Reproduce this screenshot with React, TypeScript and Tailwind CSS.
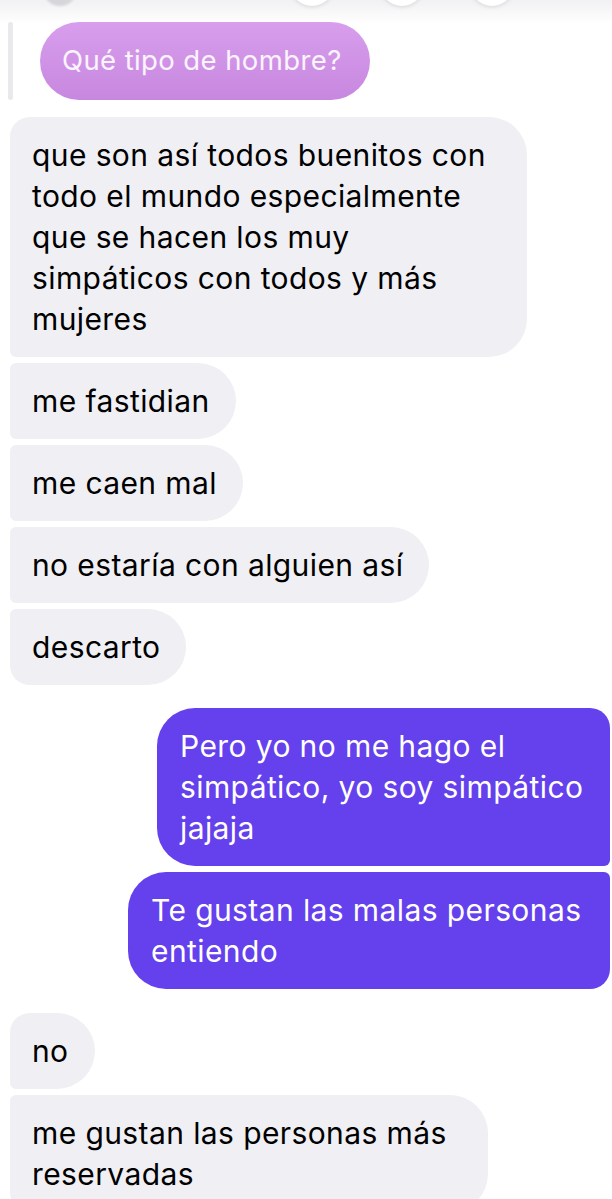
type Side = "in" | "out";

interface Msg {
  side: Side;
  lines: string[];
  width?: string;
  corners: string;
  gapTop: string;
}

const messages: Msg[] = [
  {
    side: "in",
    lines: [
      "que son así todos buenitos con",
      "todo el mundo especialmente",
      "que se hacen los muy",
      "simpáticos con todos y más",
      "mujeres",
    ],
    width: "w-[517px]",
    corners: "rounded-tl-[20px] rounded-bl-[6px] rounded-r-[38px]",
    gapTop: "mt-[17px]",
  },
  { side: "in", lines: ["me fastidian"], corners: "rounded-l-[6px] rounded-r-[38px]", gapTop: "mt-[6px]" },
  { side: "in", lines: ["me caen mal"], corners: "rounded-l-[6px] rounded-r-[38px]", gapTop: "mt-[6px]" },
  { side: "in", lines: ["no estaría con alguien así"], corners: "rounded-l-[6px] rounded-r-[38px]", gapTop: "mt-[6px]" },
  { side: "in", lines: ["descarto"], corners: "rounded-tl-[6px] rounded-bl-[20px] rounded-r-[38px]", gapTop: "mt-[6px]" },
  {
    side: "out",
    lines: ["Pero yo no me hago el", "simpático, yo soy simpático", "jajaja"],
    width: "w-[453px]",
    corners: "rounded-l-[38px] rounded-tr-[20px] rounded-br-[6px]",
    gapTop: "mt-[23px]",
  },
  {
    side: "out",
    lines: ["Te gustan las malas personas", "entiendo"],
    width: "w-[482px]",
    corners: "rounded-l-[38px] rounded-tr-[6px] rounded-br-[20px]",
    gapTop: "mt-[6px]",
  },
  { side: "in", lines: ["no"], corners: "rounded-tl-[20px] rounded-bl-[6px] rounded-r-[38px]", gapTop: "mt-[24px]" },
  {
    side: "in",
    lines: ["me gustan las personas más", "reservadas"],
    width: "w-[478px]",
    corners: "rounded-tl-[6px] rounded-bl-[20px] rounded-r-[38px]",
    gapTop: "mt-[6px]",
  },
];

const Bubble = ({ msg }: { msg: Msg }) => {
  const isOut = msg.side === "out";
  return (
    <div className={`flex ${isOut ? "justify-end pr-[2px]" : "justify-start pl-[10px]"} ${msg.gapTop}`}>
      <div
        className={`${msg.width ?? ""} ${msg.corners} ${
          isOut ? "bg-[#6441ed] text-white pl-[23px]" : "bg-[#efeff4] text-black pl-[22px]"
        } pr-[26px] py-[17.5px] text-[30px] leading-[41px] tracking-[0.4px]`}
      >
        {msg.lines.map((l) => (
          <div key={l} className="whitespace-nowrap">
            {l}
          </div>
        ))}
      </div>
    </div>
  );
};

export default function App() {
  return (
    <div
      className="relative w-[612px] h-[1199px] overflow-hidden bg-white"
      style={{ fontFamily: "Inter, 'Noto Sans', sans-serif" }}
    >
      {/* blurred reaction bar peeking from the top */}
      <div className="absolute left-0 top-0 w-full h-[24px] bg-gradient-to-b from-[#f1f1f3] to-white">
        <div className="flex items-end -mt-[38px] pl-[43px]">
          <div className="w-[34px] h-[41px] rounded-full bg-[#d5d5da] blur-[1px]" />
          <div className="ml-[213px] flex gap-[46px]">
            <div className="w-[44px] h-[44px] rounded-full bg-white shadow-[0_1px_4px_rgba(0,0,0,0.12)]" />
            <div className="w-[44px] h-[44px] rounded-full bg-white shadow-[0_1px_4px_rgba(0,0,0,0.12)]" />
            <div className="w-[44px] h-[44px] rounded-full bg-white shadow-[0_1px_4px_rgba(0,0,0,0.12)]" />
          </div>
        </div>
      </div>

      <div className="relative pt-[22px]">
        {/* reply quote */}
        <div className="flex items-stretch">
          <div className="ml-[8px] w-[5px] bg-[#e9e9ed] rounded-full" />
          <div className="ml-[27px] h-[78px] pl-[22px] pr-[28px] flex items-center rounded-[39px] bg-gradient-to-b from-[#d89eed] to-[#c787df] text-white/90 text-[27.5px] tracking-[0.4px]">
            Qué tipo de hombre?
          </div>
        </div>

        {messages.map((m, i) => (
          <Bubble key={i} msg={m} />
        ))}
      </div>
    </div>
  );
}
